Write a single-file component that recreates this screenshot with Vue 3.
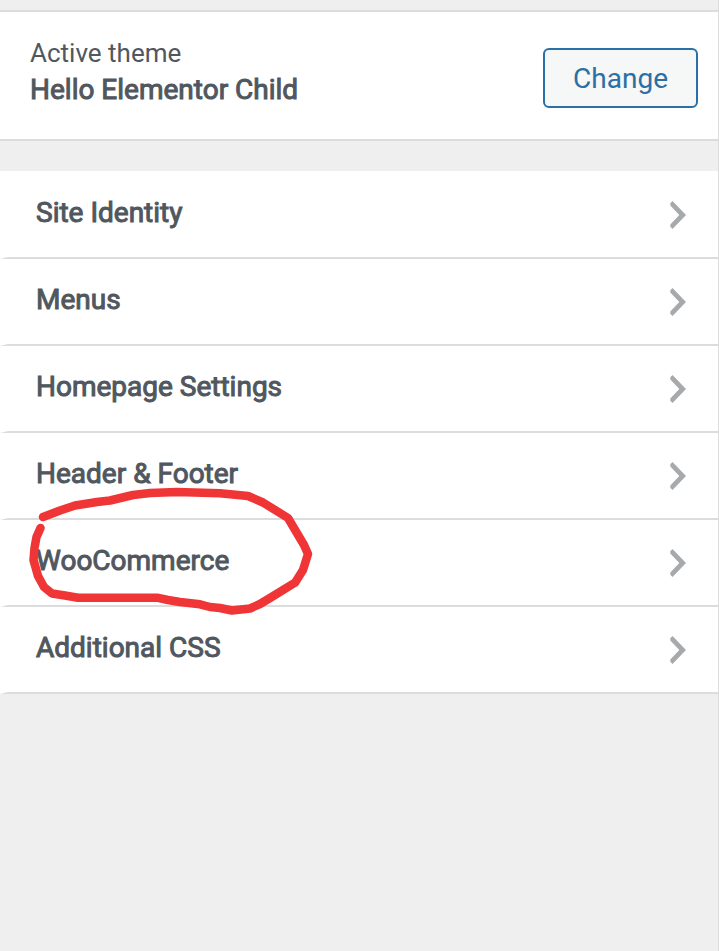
<template>
  <div class="customizer">
    <header class="theme-info">
      <div class="theme-text">
        <p class="theme-label">Active theme</p>
        <h1 class="theme-name">{{ themeName }}</h1>
      </div>
      <button type="button" class="btn-change">Change</button>
    </header>

    <nav aria-label="Customize sections">
      <ul class="sections">
        <li v-for="section in sections" :key="section.id" class="section">
          <button type="button" class="section-button">
            <span class="section-title">{{ section.title }}</span>
            <svg class="chevron" viewBox="0 0 16 28" aria-hidden="true">
              <path d="M2.5 0 L16 14 L2.5 28 L0.3 25.8 V23.4 L9.3 14 L0.3 4.6 V2.2 Z" />
            </svg>
          </button>

          <!-- hand-drawn marker around the section -->
          <svg
            v-if="section.marked"
            class="marker"
            viewBox="28 484 288 132"
            aria-hidden="true"
          >
            <path
              d="M40.5 528 L36.5 537 L34.5 548 L33.5 560 L38 576 L44 587 L52 593.5 L65 595.5 L78 597.7 L157 597.7 L168 600 L180 602 L200 604.3 L210 607 L220 608 L232 610.5 L250 608.5 L260 604 L270 598 L295 582.7 L303 570 L308 554 L304 545 L288 518 L263 502.5 L248 496 L220 493.3 L177 492 L150 493 L133 495 L110 500.5 L97 502 L75 505.5 L60 510.5 L43 517"
            />
          </svg>
        </li>
      </ul>
    </nav>
  </div>
</template>

<script setup>
import { ref } from 'vue'

const themeName = ref('Hello Elementor Child')

const sections = ref([
  { id: 'title_tagline', title: 'Site Identity' },
  { id: 'nav_menus', title: 'Menus' },
  { id: 'static_front_page', title: 'Homepage Settings' },
  { id: 'hello_header_footer', title: 'Header & Footer' },
  { id: 'woocommerce', title: 'WooCommerce', marked: true },
  { id: 'custom_css', title: 'Additional CSS' }
])
</script>

<style>
body {
  margin: 0;
  background: #efefef;
}
</style>

<style scoped>
.customizer {
  box-sizing: border-box;
  min-height: 100vh;
  padding-top: 10px;
  border-right: 1px solid #dcdcdc;
  background: #efefef;
  color: #50575e;
  font-family: Roboto, "Liberation Sans", sans-serif;
}

.theme-info {
  display: flex;
  align-items: flex-end;
  justify-content: space-between;
  margin-bottom: 30px;
  padding: 22px 20px 31px 30px;
  border-top: 2px solid #dcdcdc;
  border-bottom: 2px solid #dcdcdc;
  background: #fff;
}

.theme-label {
  margin: 0;
  font-size: 26px;
  line-height: 38px;
}

.theme-name {
  margin: 0;
  font-size: 28px;
  font-weight: 400;
  line-height: 36px;
  -webkit-text-stroke: 1px currentColor;
}

.btn-change {
  height: 60px;
  padding: 0 28px;
  border: 2px solid #2a6fa5;
  border-radius: 6px;
  background: #f6f7f7;
  color: #2a6fa5;
  font-family: inherit;
  font-size: 28px;
  cursor: pointer;
}

.sections {
  margin: 0;
  padding: 1px 0 0;
  background: #fff;
  list-style: none;
}

.section {
  position: relative;
  border-bottom: 2px solid #dcdcdc;
  border-left: 8px solid #fff;
}

.section-button {
  display: flex;
  align-items: center;
  justify-content: space-between;
  width: 100%;
  height: 85px;
  padding: 0 32px 0 28px;
  border: none;
  background: #fff;
  color: inherit;
  font-family: inherit;
  text-align: left;
  cursor: pointer;
}

.section-title {
  padding-bottom: 4px;
  font-size: 28px;
  line-height: 36px;
  -webkit-text-stroke: 1px currentColor;
}

.chevron {
  width: 16px;
  height: 28px;
}

.chevron path {
  fill: #a7aaad;
}

.marker {
  position: absolute;
  top: -36px;
  left: 20px;
  z-index: 1;
  width: 288px;
  height: 132px;
  pointer-events: none;
}

.marker path {
  fill: none;
  stroke: #ef3535;
  stroke-width: 8.5;
  stroke-linecap: round;
  stroke-linejoin: round;
}
</style>
